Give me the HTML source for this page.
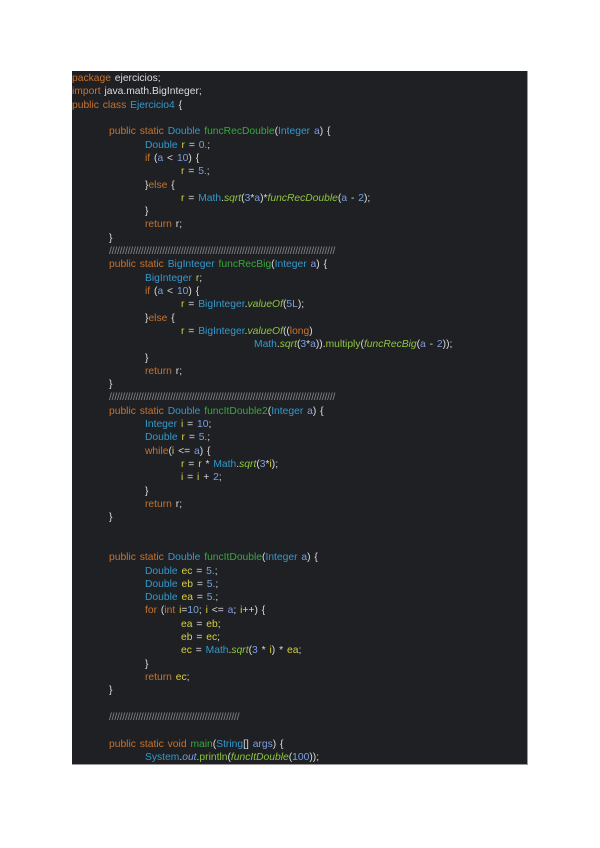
<!DOCTYPE html>
<html><head><meta charset="utf-8"><style>
html,body{margin:0;padding:0;background:#fff;width:600px;height:848px;overflow:hidden}
#c{position:absolute;left:72px;top:71px;width:456px;height:694px;background:#1f2024;border-right:1px solid #999;border-bottom:1px solid #999;box-sizing:border-box}
#in{position:absolute;left:0;top:1px;width:100%}
.l{position:absolute;left:0;height:13.31px;line-height:13.31px;font-family:"Liberation Sans",sans-serif;font-size:10.3px;color:#dcdcdc;white-space:pre;word-spacing:1px}
.k{color:#c8732d}.t{color:#3399cc}.f{color:#37a93c}.i{color:#8ec63f;font-style:italic}.v{color:#d8d040}.a{color:#7d9de0}.n{color:#7aa0dc}.c{color:#8a8a8a;letter-spacing:-0.2px}
</style></head><body><div id="c"><div id="in">
<div class="l" style="top:0px;left:0"><span class="k">package</span> ejercicios;</div>
<div class="l" style="top:13.3px;left:0"><span class="k">import</span> java.math.BigInteger;</div>
<div class="l" style="top:26.6px;left:0"><span class="k">public class</span> <span class="t">Ejercicio4</span> {</div>
<div class="l" style="top:53.2px;left:37px"><span class="k">public static</span> <span class="t">Double</span> <span class="f">funcRecDouble</span>(<span class="t">Integer</span> <span class="a">a</span>) {</div>
<div class="l" style="top:66.5px;left:73px"><span class="t">Double</span> <span class="v">r</span> = <span class="n">0.</span>;</div>
<div class="l" style="top:79.9px;left:73px"><span class="k">if</span> (<span class="a">a</span> &lt; <span class="n">10</span>) {</div>
<div class="l" style="top:93.2px;left:109px"><span class="v">r</span> = <span class="n">5.</span>;</div>
<div class="l" style="top:106.5px;left:73px">}<span class="k">else</span> {</div>
<div class="l" style="top:119.8px;left:109px"><span class="v">r</span> = <span class="t">Math</span>.<span class="i">sqrt</span>(<span class="n">3</span>*<span class="a">a</span>)*<span class="i">funcRecDouble</span>(<span class="a">a</span> - <span class="n">2</span>);</div>
<div class="l" style="top:133.1px;left:73px">}</div>
<div class="l" style="top:146.4px;left:73px"><span class="k">return</span> r;</div>
<div class="l" style="top:159.7px;left:37px">}</div>
<div class="l c" style="top:173px;left:37px">/////////////////////////////////////////////////////////////////////////////////////</div>
<div class="l" style="top:186.3px;left:37px"><span class="k">public static</span> <span class="t">BigInteger</span> <span class="f">funcRecBig</span>(<span class="t">Integer</span> <span class="a">a</span>) {</div>
<div class="l" style="top:199.6px;left:73px"><span class="t">BigInteger</span> <span class="v">r</span>;</div>
<div class="l" style="top:212.9px;left:73px"><span class="k">if</span> (<span class="a">a</span> &lt; <span class="n">10</span>) {</div>
<div class="l" style="top:226.3px;left:109px"><span class="v">r</span> = <span class="t">BigInteger</span>.<span class="i">valueOf</span>(<span class="n">5L</span>);</div>
<div class="l" style="top:239.6px;left:73px">}<span class="k">else</span> {</div>
<div class="l" style="top:252.9px;left:109px"><span class="v">r</span> = <span class="t">BigInteger</span>.<span class="i">valueOf</span>((<span class="k">long</span>)</div>
<div class="l" style="top:266.2px;left:182px"><span class="t">Math</span>.<span class="i">sqrt</span>(<span class="n">3</span>*<span class="a">a</span>)).<span class="f" style="color:#8ec63f">multiply</span>(<span class="i">funcRecBig</span>(<span class="a">a</span> - <span class="n">2</span>));</div>
<div class="l" style="top:279.5px;left:73px">}</div>
<div class="l" style="top:292.8px;left:73px"><span class="k">return</span> r;</div>
<div class="l" style="top:306.1px;left:37px">}</div>
<div class="l c" style="top:319.4px;left:37px">/////////////////////////////////////////////////////////////////////////////////////</div>
<div class="l" style="top:332.7px;left:37px"><span class="k">public static</span> <span class="t">Double</span> <span class="f">funcItDouble2</span>(<span class="t">Integer</span> <span class="a">a</span>) {</div>
<div class="l" style="top:346px;left:73px"><span class="t">Integer</span> <span class="v">i</span> = <span class="n">10</span>;</div>
<div class="l" style="top:359.4px;left:73px"><span class="t">Double</span> <span class="v">r</span> = <span class="n">5.</span>;</div>
<div class="l" style="top:372.7px;left:73px"><span class="k">while</span>(<span class="v">i</span> &lt;= <span class="a">a</span>) {</div>
<div class="l" style="top:386px;left:109px"><span class="v">r</span> = <span class="v">r</span> * <span class="t">Math</span>.<span class="i">sqrt</span>(<span class="n">3</span>*<span class="v">i</span>);</div>
<div class="l" style="top:399.3px;left:109px"><span class="v">i</span> = <span class="v">i</span> + <span class="n">2</span>;</div>
<div class="l" style="top:412.6px;left:73px">}</div>
<div class="l" style="top:425.9px;left:73px"><span class="k">return</span> r;</div>
<div class="l" style="top:439.2px;left:37px">}</div>
<div class="l" style="top:479.2px;left:37px"><span class="k">public static</span> <span class="t">Double</span> <span class="f">funcItDouble</span>(<span class="t">Integer</span> <span class="a">a</span>) {</div>
<div class="l" style="top:492.5px;left:73px"><span class="t">Double</span> <span class="v">ec</span> = <span class="n">5.</span>;</div>
<div class="l" style="top:505.8px;left:73px"><span class="t">Double</span> <span class="v">eb</span> = <span class="n">5.</span>;</div>
<div class="l" style="top:519.1px;left:73px"><span class="t">Double</span> <span class="v">ea</span> = <span class="n">5.</span>;</div>
<div class="l" style="top:532.4px;left:73px"><span class="k">for</span> (<span class="k">int</span> <span class="v">i</span>=<span class="n">10</span>; <span class="v">i</span> &lt;= <span class="a">a</span>; <span class="v">i</span>++) {</div>
<div class="l" style="top:545.8px;left:109px"><span class="v">ea</span> = <span class="v">eb</span>;</div>
<div class="l" style="top:559.1px;left:109px"><span class="v">eb</span> = <span class="v">ec</span>;</div>
<div class="l" style="top:572.4px;left:109px"><span class="v">ec</span> = <span class="t">Math</span>.<span class="i">sqrt</span>(<span class="n">3</span> * <span class="v">i</span>) * <span class="v">ea</span>;</div>
<div class="l" style="top:585.7px;left:73px">}</div>
<div class="l" style="top:599px;left:73px"><span class="k">return</span> <span class="v">ec</span>;</div>
<div class="l" style="top:612.3px;left:37px">}</div>
<div class="l c" style="top:638.9px;left:37px">/////////////////////////////////////////////////</div>
<div class="l" style="top:665.5px;left:37px"><span class="k">public static void</span> <span class="f">main</span>(<span class="t">String</span>[] <span class="a">args</span>) {</div>
<div class="l" style="top:678.8px;left:73px"><span class="t">System</span>.<span class="a" style="font-style:italic">out</span>.<span class="f" style="color:#8ec63f">println</span>(<span class="i">funcItDouble</span>(<span class="n">100</span>));</div>
</div></div></body></html>
